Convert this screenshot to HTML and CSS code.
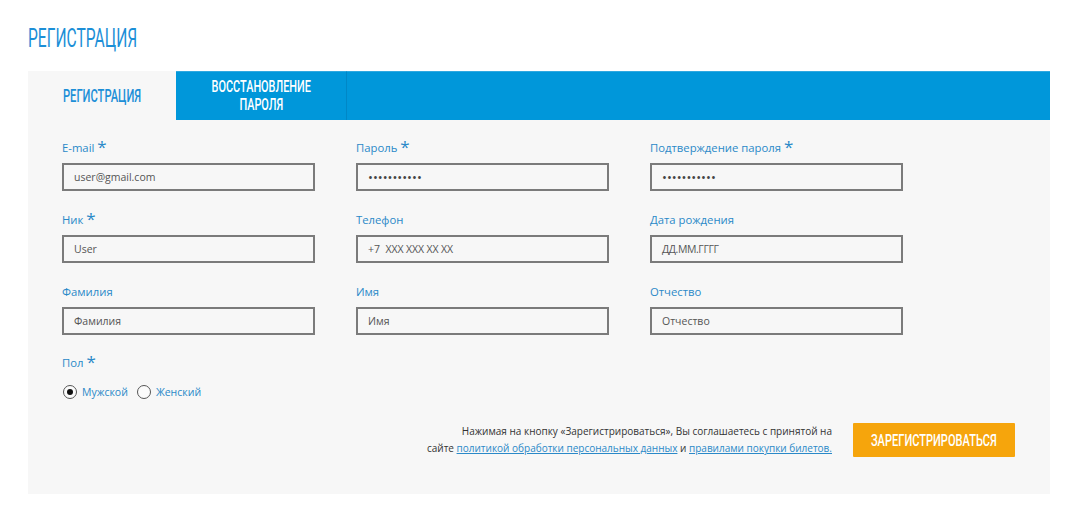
FILE: index.html
```html
<!DOCTYPE html>
<html lang="ru">
<head>
<meta charset="utf-8">
<title>Регистрация</title>
<link rel="stylesheet" href="styles.css">
</head>
<body>
<div class="page">
  <h1 class="title"><span class="cond">РЕГИСТРАЦИЯ</span></h1>
  <div class="panel">
    <div class="tabs">
      <div class="tab active"><span class="cond">РЕГИСТРАЦИЯ</span></div>
      <div class="tab"><span class="cond two">ВОССТАНОВЛЕНИЕ<br>ПАРОЛЯ</span></div>
      <div class="tab-fill"></div>
    </div>
    <form class="form">
      <div class="grid">
        <div class="field">
          <label class="label">E-mail <span class="req">*</span></label>
          <div class="input">user@gmail.com</div>
        </div>
        <div class="field">
          <label class="label">Пароль <span class="req">*</span></label>
          <div class="input dots">•••••••••••</div>
        </div>
        <div class="field">
          <label class="label">Подтверждение пароля <span class="req">*</span></label>
          <div class="input dots">•••••••••••</div>
        </div>
        <div class="field">
          <label class="label">Ник <span class="req">*</span></label>
          <div class="input">User</div>
        </div>
        <div class="field">
          <label class="label">Телефон</label>
          <div class="input">+7&nbsp;&nbsp;<span class="mask">XXX XXX XX XX</span></div>
        </div>
        <div class="field">
          <label class="label">Дата рождения</label>
          <div class="input"><span class="mask date">ДД.ММ.ГГГГ</span></div>
        </div>
        <div class="field">
          <label class="label">Фамилия</label>
          <div class="input">Фамилия</div>
        </div>
        <div class="field">
          <label class="label">Имя</label>
          <div class="input">Имя</div>
        </div>
        <div class="field">
          <label class="label">Отчество</label>
          <div class="input">Отчество</div>
        </div>
      </div>
      <div class="gender">
        <label class="label">Пол <span class="req">*</span></label>
        <div class="radios">
          <span class="radio checked"></span><span class="radio-text">Мужской</span>
          <span class="radio"></span><span class="radio-text">Женский</span>
        </div>
      </div>
      <div class="footer">
        <p class="agree">Нажимая на кнопку «Зарегистрироваться», Вы соглашаетесь с принятой на<br>сайте <a href="#">политикой обработки персональных данных</a> и <a href="#">правилами покупки билетов.</a></p>
        <button type="button" class="submit"><span class="cond">ЗАРЕГИСТРИРОВАТЬСЯ</span></button>
      </div>
    </form>
  </div>
</div>
</body>
</html>
```
FILE: styles.css
```css
* { box-sizing: border-box; }
body {
  margin: 0;
  background: #ffffff;
  font-family: "Open Sans", "Noto Sans", sans-serif;
}
.page {
  padding: 22px 28px 0 28px;
}
.cond {
  display: inline-block;
  font-family: Roboto, "Liberation Sans", sans-serif;
  font-weight: 500;
  transform: scaleX(0.62);
  transform-origin: center;
  white-space: nowrap;
}
.title {
  margin: 0;
  height: 49px;
  font-size: 26px;
  font-weight: normal;
  line-height: 30px;
  color: #1c8fd7;
}
.title .cond {
  font-weight: 400;
  transform: scaleX(0.6);
  transform-origin: left center;
}
.panel {
  width: 1022px;
  background: #f7f7f7;
  padding-bottom: 37px;
}
.tabs {
  display: flex;
  height: 49px;
}
.tab {
  display: flex;
  align-items: center;
  justify-content: center;
  text-align: center;
  font-size: 18px;
  line-height: 18px;
  color: #ffffff;
  background: #0097da;
  width: 171px;
  border-right: 1px solid #0087c6;
  border-top: 1px solid #2fa8e0;
}
.tab .two {
  font-size: 16.5px;
  line-height: 18px;
  transform: scaleX(0.66);
}
.tab.active {
  width: 148px;
  background: #f7f7f7;
  color: #1c8fd7;
  border: none;
}
.tab-fill {
  flex: 1;
  background: #0097da;
  border-top: 1px solid #2fa8e0;
}
.form {
  padding: 18px 35px 0 34px;
}
.grid {
  display: grid;
  grid-template-columns: 253px 253px 253px;
  column-gap: 41px;
  row-gap: 19px;
}
.field {
  display: flex;
  flex-direction: column;
}
.label {
  display: block;
  height: 20px;
  margin-bottom: 5px;
  font-size: 11.3px;
  line-height: 20px;
  color: #2a89c8;
}
.req {
  font-size: 17px;
  line-height: 12px;
  position: relative;
  top: 1px;
}
.input {
  height: 28px;
  border: 2px solid #7b7b7b;
  background: #f7f7f7;
  padding: 0 10px;
  font-size: 10.5px;
  line-height: 24px;
  color: #555555;
}
.input.dots {
  font-size: 13px;
  letter-spacing: 0;
  color: #444;
}
.mask {
  letter-spacing: -0.1px;
}
.mask.date {
  letter-spacing: -0.4px;
}
.gender {
  margin-top: 18px;
}
.radios {
  display: flex;
  align-items: center;
  margin-top: 11px;
  height: 16px;
}
.radio {
  width: 14px;
  height: 14px;
  border: 1.5px solid #555;
  border-radius: 50%;
  background: #fbfbfb;
  display: flex;
  align-items: center;
  justify-content: center;
  margin-left: 1px;
}
.radio.checked::after {
  content: "";
  width: 6px;
  height: 6px;
  border-radius: 50%;
  background: #111;
}
.radio-text {
  font-size: 10.5px;
  color: #2a89c8;
  margin: 0 8px 0 5px;
}
.footer {
  display: flex;
  justify-content: flex-end;
  align-items: center;
  margin-top: 23px;
}
.agree {
  margin: 0 21px 0 0;
  text-align: right;
  font-size: 10px;
  line-height: 17px;
  color: #333333;
}
.agree a {
  color: #2a89c8;
}
.submit {
  display: flex;
  align-items: center;
  justify-content: center;
  overflow: visible;
  width: 162px;
  height: 34px;
  background: #f6a50c;
  border: none;
  border-radius: 1px;
  color: #ffffff;
  font-size: 17px;
  padding: 0;
  cursor: pointer;
}
.submit .cond {
  transform: scaleX(0.65);
}
```
